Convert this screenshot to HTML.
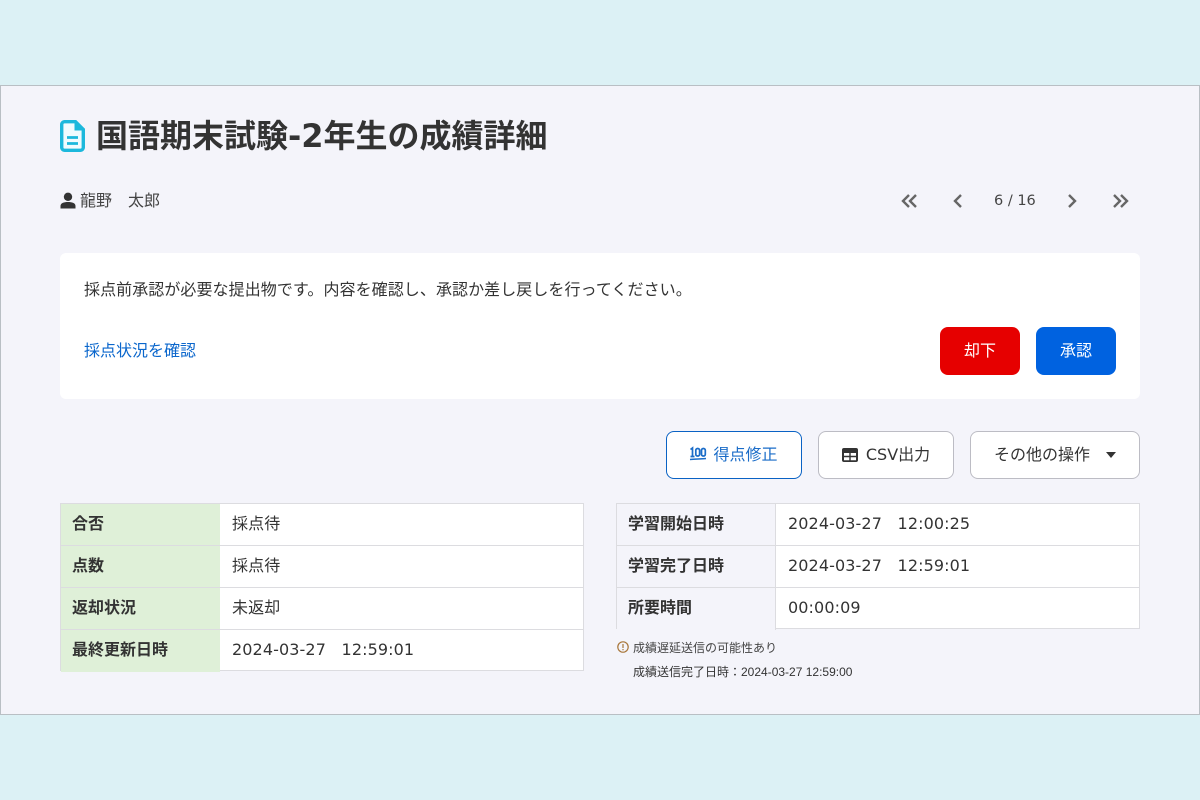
<!DOCTYPE html>
<html lang="ja"><head><meta charset="utf-8"><style>
*{box-sizing:border-box}
html,body{margin:0;padding:0}
body{width:1200px;height:800px;background:#dcf1f5;position:relative;overflow:hidden;font-family:"DejaVu Sans","Noto Sans CJK JP",sans-serif;color:#333;font-size:16px}
.a{position:absolute;white-space:nowrap}
#m{position:absolute;left:0;top:85px;width:1200px;height:630px;background:#f4f4fa;border:1px solid #b9bfc4}
.btn{position:absolute;height:48px;border-radius:8px;line-height:45px;text-align:center;font-size:16px;background:#fff;border:1px solid #bcbcc4;white-space:nowrap}
.tb{position:absolute;border:1px solid #dcdce0;background:#fff}
.r{position:absolute;left:0;right:0;height:42px;border-bottom:1px solid #dcdce0;line-height:40px;white-space:nowrap}
.r:last-child{border-bottom:0}
.r b{position:absolute;left:0;top:0;width:159px;height:100%;padding-left:11px;font-size:16px;font-weight:700}
.r span{position:absolute;left:171px;top:0;font-size:16px;letter-spacing:.1px}
.g b{background:#dff0d8}
.h b{background:#f4f4fa;border-right:1px solid #dcdce0}
</style></head><body>
<div id="m"></div>
<svg class="a" style="left:60px;top:120px" width="25" height="32" viewBox="0 0 25 32"><path d="M4.500 1.700H15.500L23.300 9.500V27.500A2.800 2.800 0 0 1 20.500 30.300H4.500A2.800 2.800 0 0 1 1.700 27.500V4.500A2.800 2.800 0 0 1 4.500 1.700Z" fill="#f0fbfe" stroke="#1cb8dc" stroke-width="3.400"/><path d="M14.500 1.500V10.500H23.500Z" fill="#1cb8dc"/><path d="M7 17.500H18M7 23.500H18" stroke="#1cb8dc" stroke-width="2.800"/></svg>
<div class="a" style="left:96px;top:114px;font-size:32px;font-weight:700;line-height:44px;color:#333">国語期末試験-2年生の成績詳細</div>
<svg class="a" style="left:60px;top:192px" width="16" height="17" viewBox="0 0 16 17"><circle cx="8" cy="4.800" r="4.200" fill="#333"/><path d="M0.500 16.500V14C0.500 11 4 10 8 10S15.500 11 15.500 14V16.500Z" fill="#333"/></svg>
<div class="a" style="left:80px;top:189px;font-size:16px;line-height:24px;color:#444">龍野　太郎</div>
<svg class="a" style="left:900px;top:192px" width="240" height="18" viewBox="0 0 240 18" fill="none" stroke="#666" stroke-width="2.400"><path d="M9 3L3 9L9 15M16 3L10 9L16 15M61 3L55 9L61 15M169 3L175 9L169 15M214 3L220 9L214 15M221 3L227 9L221 15"/></svg>
<div class="a" style="left:994px;top:190px;font-size:14.500px;line-height:22px;color:#444">6 / 16</div>
<div style="position:absolute;left:60px;top:253px;width:1080px;height:146px;background:#fff;border-radius:6px"></div>
<div class="a" style="left:84px;top:278px;font-size:16px;line-height:24px;letter-spacing:.07px">採点前承認が必要な提出物です。内容を確認し、承認か差し戻しを行ってください。</div>
<div class="a" style="left:84px;top:339px;font-size:16px;line-height:24px;color:#0a66cc">採点状況を確認</div>
<div class="btn" style="left:940px;top:327px;width:80px;background:#e60000;border:0;color:#fff;line-height:47px">却下</div>
<div class="btn" style="left:1036px;top:327px;width:80px;background:#0062e0;border:0;color:#fff;line-height:47px">承認</div>
<div class="btn" style="left:666px;top:431px;width:136px;border-color:#0a62c4;color:#1a6cc8;padding-left:23px">得点修正</div>
<svg class="a" style="left:689px;top:446px" width="18" height="16" viewBox="0 0 18 16" fill="none" stroke="#1a6cc8" stroke-width="1.700"><path d="M1.500 3.500L3.500 2V10.500M1.500 10.500H5.500"/><rect x="6.800" y="2.500" width="3.800" height="7.500" rx="1.800"/><rect x="12.500" y="2.500" width="3.800" height="7.500" rx="1.800"/><path d="M1 13.500C6 13 12 13 17 12.500" stroke-width="1.500"/></svg>
<div class="btn" style="left:818px;top:431px;width:136px;padding-left:24px;">CSV出力</div>
<svg class="a" style="left:842px;top:448px" width="16" height="14" viewBox="0 0 16 14"><rect x="0" y="0" width="16" height="14" rx="2" fill="#333"/><path d="M2 5h5.300v2.700H2zM8.700 5H14v2.700H8.700zM2 9.200h5.300v3H2zM8.700 9.200H14v3H8.700z" fill="#fff"/></svg>
<div class="btn" style="left:970px;top:431px;width:170px;text-align:left;padding-left:23px">その他の操作</div>
<svg class="a" style="left:1106px;top:452px" width="10" height="7" viewBox="0 0 10 7"><path d="M0 0H10L5 6Z" fill="#333"/></svg>
<div class="tb g" style="left:60px;top:503px;width:524px;height:168px">
<div class="r" style="top:0"><b>合否</b><span>採点待</span></div>
<div class="r" style="top:42px"><b>点数</b><span>採点待</span></div>
<div class="r" style="top:84px"><b>返却状況</b><span>未返却</span></div>
<div class="r" style="top:126px"><b>最終更新日時</b><span>2024-03-27&nbsp;&nbsp; 12:59:01</span></div>
</div>
<div class="tb h" style="left:616px;top:503px;width:524px;height:126px">
<div class="r" style="top:0"><b>学習開始日時</b><span>2024-03-27&nbsp;&nbsp; 12:00:25</span></div>
<div class="r" style="top:42px"><b>学習完了日時</b><span>2024-03-27&nbsp;&nbsp; 12:59:01</span></div>
<div class="r" style="top:84px"><b>所要時間</b><span>00:00:09</span></div>
</div>
<svg class="a" style="left:617px;top:641px" width="12" height="12" viewBox="0 0 12 12" fill="none" stroke="#a8763a" stroke-width="1.200"><circle cx="6" cy="6" r="5.200"/><path d="M6 3V7M6 8V9.200"/></svg>
<div class="a" style="left:633px;top:639px;font-size:12px;line-height:18px;color:#444">成績遅延送信の可能性あり</div>
<div class="a" style="left:633px;top:663px;font-size:12px;line-height:18px;color:#333;font-family:'Liberation Sans','Noto Sans CJK JP',sans-serif">成績送信完了日時：2024-03-27 12:59:00</div>
</body></html>
